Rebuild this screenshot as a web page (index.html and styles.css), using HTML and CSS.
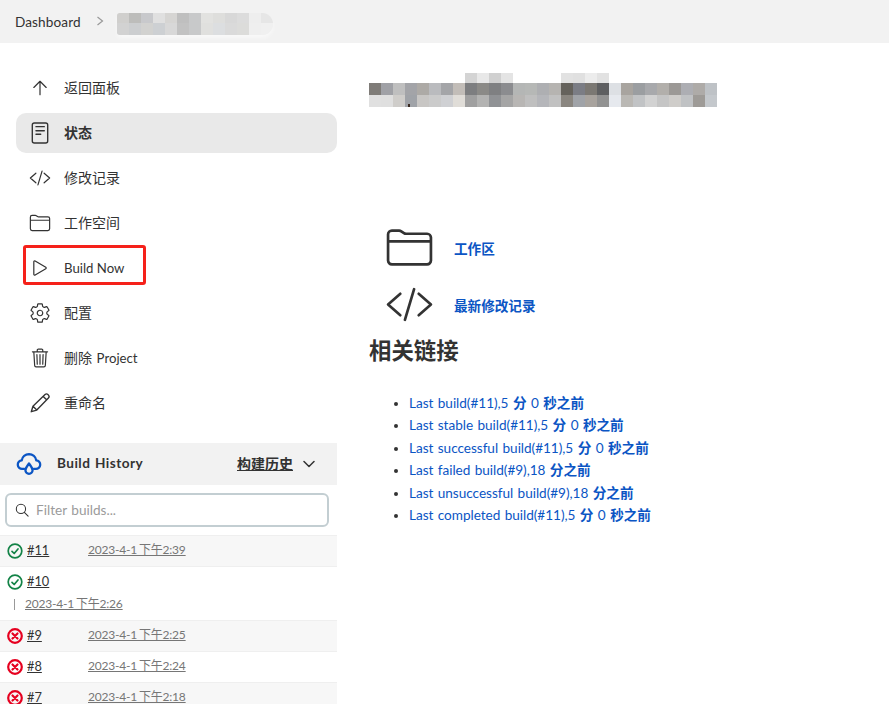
FILE: index.html
```html
<!DOCTYPE html>
<html lang="zh-CN">
<head>
<meta charset="utf-8">
<title>Project</title>
<link rel="stylesheet" href="styles.css">
</head>
<body>
<header class="crumbs">
  <a class="crumb">Dashboard</a>
  <svg class="crumb-sep" viewBox="0 0 10 12"><path d="M2.5 2l5 4-5 4"/></svg>
  <div class="mosaic-crumb"></div>
</header>
<div class="layout">
  <aside class="side">
    <nav class="tasks">
      <a class="task">
        <svg class="ic" viewBox="0 0 512 512"><path d="M112 244L256 100 400 244M256 120v292"/></svg>
        <span>返回面板</span>
      </a>
      <a class="task active">
        <svg class="ic" viewBox="0 0 24 24"><rect class="thin" x="3.600" y="1.100" width="16.800" height="21.800" rx="2.200"/><path class="thin" d="M7.600 5.100h9.100M7.600 9.500h9.100M7.600 13.400h5.200"/></svg>
        <span>状态</span>
      </a>
      <a class="task">
        <svg class="ic" viewBox="0 0 512 512"><path d="M160 368L32 256l128-112M352 368l128-112-128-112M304 96l-96 320"/></svg>
        <span>修改记录</span>
      </a>
      <a class="task">
        <svg class="ic" viewBox="0 0 512 512"><path d="M440 432H72a40 40 0 01-40-40V120a40 40 0 0140-40h75.89a40 40 0 0122.19 6.72l27.84 18.56a40 40 0 0022.19 6.72H440a40 40 0 0140 40v240a40 40 0 01-40 40zM32 192h448"/></svg>
        <span>工作空间</span>
      </a>
      <a class="task">
        <svg class="ic" viewBox="0 0 512 512"><path d="M112 111v290c0 17.44 17 28.52 31 20.16l247.9-148.37c12.12-7.25 12.12-26.33 0-33.58L143 90.84c-14-8.36-31 2.72-31 20.16z"/></svg>
        <span class="latin">Build Now</span>
        <i class="highlight"></i>
      </a>
      <a class="task">
        <svg class="ic" viewBox="0 0 512 512"><path d="M262.29 192.31a64 64 0 1057.4 57.4 64.13 64.13 0 00-57.4-57.4zM416.39 256a154.34 154.34 0 01-1.53 20.79l45.21 35.46a10.81 10.81 0 012.45 13.75l-42.77 74a10.81 10.81 0 01-13.14 4.59l-44.9-18.08a16.11 16.11 0 00-15.17 1.75A164.48 164.48 0 01325 400.8a15.94 15.94 0 00-8.82 12.14l-6.73 47.89a11.08 11.08 0 01-10.68 9.17h-85.54a11.11 11.11 0 01-10.69-8.87l-6.72-47.82a16.07 16.07 0 00-9-12.22 155.3 155.3 0 01-21.46-12.57 16 16 0 00-15.11-1.71l-44.89 18.07a10.81 10.81 0 01-13.14-4.58l-42.77-74a10.8 10.8 0 012.45-13.75l38.21-30a16.05 16.05 0 006-14.08c-.36-4.17-.58-8.33-.58-12.5s.21-8.27.58-12.35a16 16 0 00-6.07-13.94l-38.19-30A10.81 10.81 0 0149.48 186l42.77-74a10.81 10.81 0 0113.14-4.59l44.9 18.08a16.11 16.11 0 0015.17-1.75A164.48 164.48 0 01187 111.2a15.94 15.94 0 008.82-12.14l6.73-47.89A11.08 11.08 0 01213.23 42h85.54a11.11 11.11 0 0110.69 8.87l6.72 47.82a16.07 16.07 0 009 12.22 155.3 155.3 0 0121.46 12.57 16 16 0 0015.11 1.71l44.89-18.07a10.81 10.81 0 0113.14 4.58l42.77 74a10.8 10.8 0 01-2.45 13.75l-38.21 30a16.05 16.05 0 00-6.05 14.08c.33 4.14.55 8.3.55 12.47z"/></svg>
        <span>配置</span>
      </a>
      <a class="task">
        <svg class="ic" viewBox="0 0 512 512"><path d="M112 112l20 320c.95 18.49 14.4 32 32 32h184c17.67 0 30.87-13.51 32-32l20-320M80 112h352M192 112V72a23.93 23.93 0 0124-24h80a23.93 23.93 0 0124 24v40M256 176v224M184 176l8 224M328 176l-8 224"/></svg>
        <span>删除 <em class="latin">Project</em></span>
      </a>
      <a class="task">
        <svg class="ic" viewBox="0 0 24 24"><path class="thin" d="M2.500 21.500l1.800-6L17.500 2.800a2.200 2.200 0 013.100 0l.6.600a2.200 2.200 0 010 3.100L8.500 19.700zM4.300 15.500l4.200 4.200M15.500 4.800l3.700 3.700"/></svg>
        <span>重命名</span>
      </a>
    </nav>

    <section class="history">
      <div class="history-head">
        <svg class="cloud" viewBox="0 0 24 22"><path d="M7.500 15.500H5.800a3.900 3.900 0 01-.5-7.800A6.900 6.900 0 0112 1.800a6.900 6.900 0 016.700 5.900 3.900 3.900 0 01-.5 7.800h-1.700"/><path d="M12 10.500c1.200 2 3.300 3.900 3.300 6.300a3.300 3.300 0 01-6.600 0c0-2.400 2.100-4.300 3.300-6.300z"/></svg>
        <span class="history-title">Build History</span>
        <a class="history-link">构建历史</a>
        <svg class="chev" viewBox="0 0 12 8"><path d="M1 1.500l5 5 5-5"/></svg>
      </div>
      <div class="filter">
        <svg class="search" viewBox="0 0 16 16"><circle cx="6.800" cy="6.800" r="5.300"/><path d="M10.700 10.700l4.300 4.300"/></svg>
        <span class="placeholder">Filter builds...</span>
      </div>
      <ul class="builds">
        <li class="build shaded">
          <svg class="st ok" viewBox="0 0 16 16"><circle cx="8" cy="8" r="6.800"/><path d="M5 8.300l2.200 2.200L11 6"/></svg>
          <a class="num">#11</a><a class="date">2023-4-1 下午2:39</a>
        </li>
        <li class="build wrapped">
          <div class="build-line">
            <svg class="st ok" viewBox="0 0 16 16"><circle cx="8" cy="8" r="6.800"/><path d="M5 8.300l2.200 2.200L11 6"/></svg>
            <a class="num">#10</a>
          </div>
          <div class="build-line second"><i class="tick"></i><a class="date">2023-4-1 下午2:26</a></div>
        </li>
        <li class="build shaded">
          <svg class="st bad" viewBox="0 0 16 16"><circle cx="8" cy="8" r="6.800"/><path d="M5.500 5.500l5 5M10.500 5.500l-5 5"/></svg>
          <a class="num">#9</a><a class="date">2023-4-1 下午2:25</a>
        </li>
        <li class="build">
          <svg class="st bad" viewBox="0 0 16 16"><circle cx="8" cy="8" r="6.800"/><path d="M5.500 5.500l5 5M10.500 5.500l-5 5"/></svg>
          <a class="num">#8</a><a class="date">2023-4-1 下午2:24</a>
        </li>
        <li class="build shaded">
          <svg class="st bad" viewBox="0 0 16 16"><circle cx="8" cy="8" r="6.800"/><path d="M5.500 5.500l5 5M10.500 5.500l-5 5"/></svg>
          <a class="num">#7</a><a class="date">2023-4-1 下午2:18</a>
        </li>
      </ul>
    </section>
  </aside>

  <main class="main">
    <div class="mosaic-title"></div>
    <div class="big-link first">
      <svg class="big-ic" viewBox="0 0 512 512"><path d="M440 432H72a40 40 0 01-40-40V120a40 40 0 0140-40h75.89a40 40 0 0122.19 6.72l27.84 18.56a40 40 0 0022.19 6.72H440a40 40 0 0140 40v240a40 40 0 01-40 40zM32 192h448"/></svg>
      <a class="big-text">工作区</a>
    </div>
    <div class="big-link second">
      <svg class="big-ic" viewBox="0 0 512 512"><path d="M160 368L32 256l128-112M352 368l128-112-128-112M304 96l-96 320"/></svg>
      <a class="big-text">最新修改记录</a>
    </div>
    <h2 class="links-title">相关链接</h2>
    <ul class="links">
      <li><a>Last build(#11),5 <b>分</b> 0 <b>秒之前</b></a></li>
      <li><a>Last stable build(#11),5 <b>分</b> 0 <b>秒之前</b></a></li>
      <li><a>Last successful build(#11),5 <b>分</b> 0 <b>秒之前</b></a></li>
      <li><a>Last failed build(#9),18 <b>分之前</b></a></li>
      <li><a>Last unsuccessful build(#9),18 <b>分之前</b></a></li>
      <li><a>Last completed build(#11),5 <b>分</b> 0 <b>秒之前</b></a></li>
    </ul>
  </main>
</div>
</body>
</html>
```

FILE: styles.css
```css
* { box-sizing: border-box; }
html, body { margin: 0; height: 704px; overflow: hidden; background: #fff; }
body {
  font-family: Lato, "Noto Sans CJK SC", sans-serif;
  font-size: 13.600px;
  word-spacing: 1px;
  color: #333;
}
a { color: inherit; }
ul { list-style: none; margin: 0; padding: 0; }

/* breadcrumb */
.crumbs {
  height: 43px;
  background: #f2f2f2;
  display: flex;
  align-items: center;
  padding-left: 15px;
}
.crumb { color: #333; letter-spacing: .1px; }
.crumb-sep { width: 10px; height: 12px; margin: -2px 0 0 14px; fill: none; stroke: #999; stroke-width: 1.200; }
.mosaic-crumb {
  width: 156px;
  height: 22px;
  margin: 5px 0 0 12px;
  border-radius: 3px 12px 12px 3px;
  box-shadow: 0 3px 4px rgba(255, 255, 255, .5);
  background:
    linear-gradient(90deg, #d0cfcd 0 12px, #bdbdbb 12px 24px, #c8c9cc 24px 36px, #e0e0e0 36px 48px, #d6d5d3 48px 60px, #bfbfbf 60px 72px, #c8c9ca 72px 84px, #e2e2e0 84px 96px, #dededc 96px 108px, #d8d8d8 108px 120px, #dcdcdc 120px 132px, #eeeeee 132px 144px, #e6e6e6 144px) top / 100% 10px no-repeat,
    linear-gradient(90deg, #d2d2d2 0 12px, #ccced0 12px 24px, #d2d2d0 24px 36px, #cdd0d3 36px 48px, #d8d8d8 48px 60px, #c2c2c2 60px 72px, #c8c9ca 72px 84px, #e0e0de 84px 96px, #dcdee0 96px 108px, #dadada 108px 120px, #dcdcda 120px 132px, #efefef 132px 144px, #f0f0f0 144px) bottom / 100% 12px no-repeat;
}

.layout { display: flex; align-items: flex-start; }

/* sidebar */
.side { width: 337px; flex: none; padding-top: 25px; }
.tasks { display: flex; flex-direction: column; gap: 5px; padding-left: 16px; }
.task {
  position: relative;
  height: 40px;
  display: flex;
  align-items: center;
  gap: 13px;
  padding-left: 13px;
  border-radius: 10px;
  font-size: 14px;
  line-height: 38px;
  color: #333;
}
.latin { font-size: 13.200px; font-style: normal; word-spacing: 0; }
.task.active { background: #e9e9e9; font-weight: 700; }
.ic { width: 22px; height: 22px; flex: none; fill: none; stroke: #333; stroke-width: 28; stroke-linecap: round; stroke-linejoin: round; }
.ic .thin { stroke-width: 1.500; }
.highlight {
  position: absolute;
  left: 7px;
  top: -3px;
  width: 123px;
  height: 40px;
  border: 3px solid #f5211a;
  border-radius: 3px;
}

/* build history */
.history { margin-top: 20px; }
.history-head {
  height: 42px;
  background: #f2f2f2;
  display: flex;
  align-items: center;
  padding-left: 16px;
}
.cloud { width: 26px; height: 24px; flex: none; fill: none; stroke: #0b55c4; stroke-width: 2.100; stroke-linecap: round; stroke-linejoin: round; }
.history-title { margin: -2px 0 0 15px; font-weight: 700; letter-spacing: .45px; color: #333; }
.history-link { margin: -2px 0 0 auto; font-size: 14px; font-weight: 700; text-decoration: underline; color: #333; }
.chev { width: 12px; height: 8px; margin: 0 22px 0 10px; fill: none; stroke: #333; stroke-width: 1.500; stroke-linecap: round; stroke-linejoin: round; }
.filter {
  height: 34px;
  margin: 8px 8px 8px 5px;
  border: 2px solid #c3ced2;
  border-radius: 6px;
  display: flex;
  align-items: center;
  padding-left: 8px;
  gap: 7px;
}
.search { width: 14px; height: 14px; fill: none; stroke: #333; stroke-width: 1.200; stroke-linecap: round; }
.placeholder { color: #9b9b9b; }

.build {
  height: 31px;
  display: flex;
  align-items: center;
  padding-left: 7px;
  border-top: 1px solid #efefef;
}
.build.shaded { background: #f7f7f7; }
.build.wrapped { height: 54px; display: block; padding: 0 0 0 7px; }
.build-line { display: flex; align-items: center; height: 29px; }
.build-line.second { height: 17px; }
.st { width: 16px; height: 16px; flex: none; fill: none; stroke-linecap: round; stroke-linejoin: round; }
.st.ok { stroke: #138347; stroke-width: 1.700; }
.st.bad { stroke: #e6001f; stroke-width: 2.200; }
.num { margin: -2px 0 0 4px; width: 61px; font-size: 12.800px; color: #333; text-decoration: underline; }
.date { margin-top: -5px; font-size: 12px; word-spacing: -1px; letter-spacing: -.2px; color: #767676; text-decoration: underline; }
.tick { width: 1px; height: 11px; margin: 0 10px 0 7px; background: #999; }

/* main */
.main { flex: 1; padding: 30px 0 0 32px; }
.mosaic-title {
  width: 348px;
  height: 34px;
  background:
    linear-gradient(#3a2a20, #3a2a20) 39px 31px / 2px 3px no-repeat,
    linear-gradient(90deg, #fff 0 96px, #d4d4d4 96px 108px, #e8e8e8 108px 120px, #d0d0d0 120px 132px, #e4e4e4 132px 144px, #fff 144px 192px, #e2e2e2 192px 204px, #e0e0e0 204px 216px, #ececec 216px 228px, #e2e2e2 228px 240px, #fff 240px) top / 100% 10px no-repeat,
    linear-gradient(90deg, #7f7c78 0 12px, #a0a1a6 12px 24px, #bfbfbf 24px 36px, #a3a4a8 36px 48px, #adaaa6 48px 60px, #babbbe 60px 72px, #a4a5a8 72px 84px, #c2bdb8 84px 96px, #7d7e80 96px 108px, #8b8a87 108px 120px, #7f8082 120px 132px, #8b8c8f 132px 144px, #b4b6b5 144px 156px, #b6b8b6 156px 168px, #aeafb2 168px 180px, #b6b4b1 180px 192px, #65625c 192px 204px, #7b7d85 204px 216px, #7b7873 216px 228px, #5e5f61 228px 240px, #dde0e4 240px 252px, #a8a49f 252px 264px, #9b9ea1 264px 276px, #a8a9ac 276px 288px, #b2afab 288px 300px, #9c9996 300px 312px, #adaeb3 312px 324px, #aeaba8 324px 336px, #bec2c6 336px) 0 10px / 100% 12px no-repeat,
    linear-gradient(90deg, #e0e0e0 0 12px, #dfdfdf 12px 24px, #cfcdca 24px 36px, #a0a3a8 36px 48px, #c8c6c4 48px 60px, #cbcbcb 60px 72px, #cfd0d3 72px 84px, #e0ddd8 84px 96px, #a0a0a0 96px 108px, #b3b3b2 108px 120px, #909295 120px 132px, #a5a5a5 132px 144px, #b8b6b4 144px 156px, #bfbfbf 156px 168px, #b5b6ba 168px 180px, #c1c1c1 180px 192px, #8a8680 192px 204px, #a0a3a8 204px 216px, #a8a39e 216px 228px, #929292 228px 240px, #e6e9ee 240px 252px, #bab8b4 252px 264px, #c1c3c5 264px 276px, #d2d2d2 276px 288px, #c5c5c5 288px 300px, #cfcdca 300px 312px, #c0c2c4 312px 324px, #9e9b97 324px 336px, #c4c8cc 336px) 0 22px / 100% 12px no-repeat;
}
.big-link { display: flex; align-items: center; padding-left: 16px; gap: 20px; }
.big-link.first { margin-top: 115px; height: 50px; }
.big-link.second { margin-top: 7px; height: 50px; }
.big-ic { width: 49px; height: 49px; flex: none; fill: none; stroke: #333; stroke-width: 28; stroke-linecap: round; stroke-linejoin: round; }
.big-text { margin-top: 2px; font-weight: 700; color: #0b55c4; text-decoration: none; }
.links-title { margin: 6px 0 0; font-size: 22.400px; line-height: 32px; font-weight: 700; color: #333; }
.links { margin-top: 25px; padding-left: 40px; list-style: disc; }
.links li { line-height: 22.400px; }
.links li::marker { color: #333; }
.links a { color: #0b55c4; letter-spacing: -.04px; }
.links b { font-weight: 700; letter-spacing: 0; }
```
